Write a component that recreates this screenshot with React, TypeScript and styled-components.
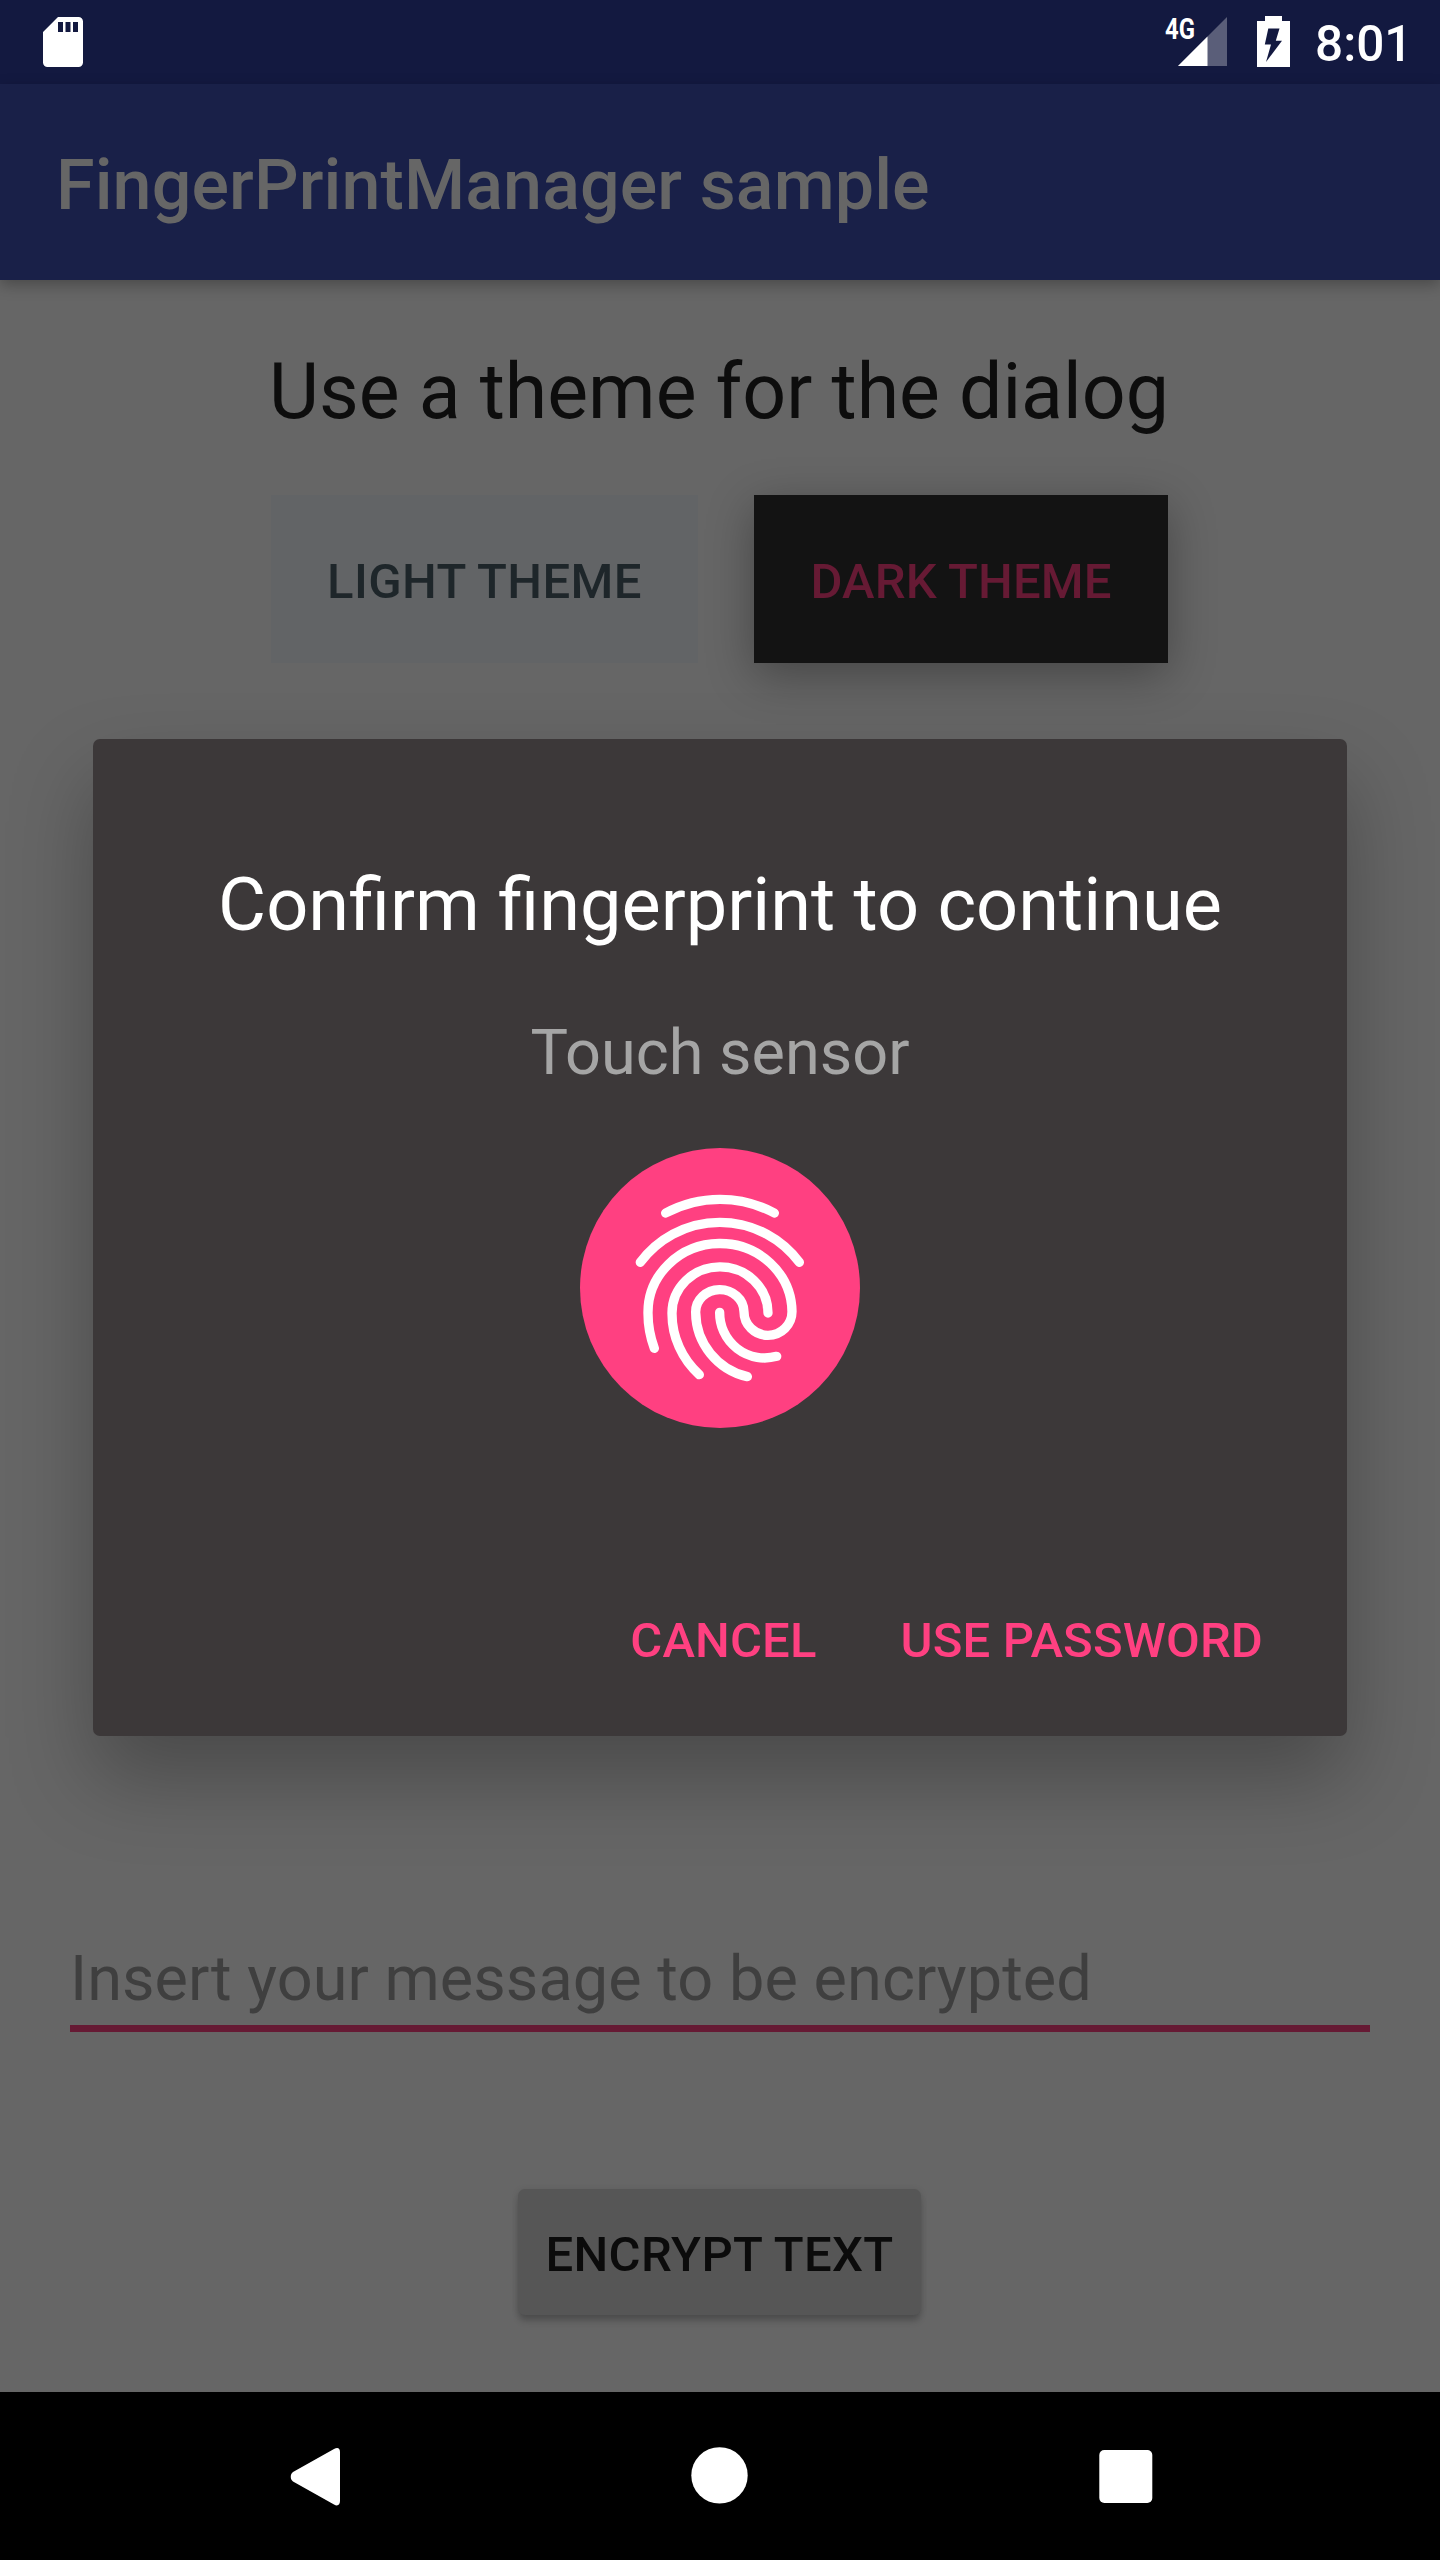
import React from 'react';
import styled, { createGlobalStyle } from 'styled-components';

const GlobalStyle = createGlobalStyle`
  *, *::before, *::after { box-sizing: border-box; }
  body { margin: 0; background: #000; }
  button { font: inherit; border: 0; margin: 0; padding: 0; background: none; }
`;

const Screen = styled.div`
  position: relative;
  display: flex;
  flex-direction: column;
  width: 1440px;
  height: 2560px;
  overflow: hidden;
  background: #666;
  font-family: Roboto, 'Liberation Sans', sans-serif;
`;

const StatusBar = styled.header`
  display: flex;
  justify-content: space-between;
  flex: none;
  height: 84px;
  padding: 0 37px 0 43px;
  background: #131940;
`;

const StatusIcons = styled.div`
  display: flex;
`;

const Icon = styled.svg`
  display: block;
  flex: none;
`;

const NetworkLabel = styled.span`
  width: 13px;
  height: 33px;
  margin-top: 13px;
  font-size: 29.5px;
  font-weight: 700;
  line-height: 33px;
  color: #fff;
  white-space: nowrap;
  transform: scaleX(0.81);
  transform-origin: left center;
`;

const Clock = styled.span`
  width: 88px;
  margin-left: 25px;
  padding-top: 2px;
  font-size: 49.5px;
  font-weight: 500;
  line-height: 84px;
  color: #fff;
  white-space: nowrap;
`;

const Toolbar = styled.div`
  position: relative;
  flex: none;
  height: 196px;
  padding: 6px 0 0 56px;
  background: #192048;
  box-shadow: 0 5px 14px rgba(0, 0, 0, 0.28);
`;

const ToolbarTitle = styled.h1`
  margin: 0;
  font-size: 70px;
  font-weight: 500;
  letter-spacing: 0.1px;
  line-height: 190px;
  color: #666;
  white-space: nowrap;
`;

const Main = styled.main`
  display: flex;
  flex: 1;
  flex-direction: column;
  align-items: center;
  padding-top: 67px;
`;

const Heading = styled.h2`
  margin: 0 2px 0 0;
  font-size: 77px;
  font-weight: 400;
  line-height: 90px;
  color: #0d0d0d;
  white-space: nowrap;
`;

const ThemeRow = styled.div`
  display: flex;
  justify-content: space-between;
  width: 897px;
  margin: 58px 1px 0 0;
`;

const ThemeButton = styled.button<{ $dark?: boolean }>`
  width: ${(p) => (p.$dark ? 414 : 427)}px;
  height: 168px;
  padding-top: 5px;
  font-size: 49px;
  font-weight: 500;
  letter-spacing: ${(p) => (p.$dark ? 0.15 : 0.4)}px;
  white-space: nowrap;
  color: ${(p) => (p.$dark ? '#661a34' : '#1e262a')};
  background: ${(p) => (p.$dark ? '#131313' : '#626466')};
  box-shadow: ${(p) => (p.$dark ? '0 12px 44px rgba(0, 0, 0, 0.32)' : 'none')};
`;

const Field = styled.div`
  width: 1300px;
  height: 91px;
  margin-top: 1278px;
  padding-top: 1px;
  border-bottom: 7px solid #661a34;
  font-size: 63px;
  letter-spacing: 0.05px;
  line-height: 74px;
  color: #3f3f3f;
  white-space: nowrap;
`;

const EncryptButton = styled.button`
  width: 403px;
  height: 126px;
  margin: 157px 1px 0 0;
  padding-top: 4px;
  border-radius: 7px;
  font-size: 49px;
  font-weight: 500;
  letter-spacing: 0.4px;
  white-space: nowrap;
  color: #0b0b0b;
  background: #565656;
  box-shadow: 0 7px 7px -1px rgba(0, 0, 0, 0.2), 0 1px 7px rgba(0, 0, 0, 0.12);
`;

const NavBar = styled.nav`
  display: flex;
  flex: none;
  justify-content: space-between;
  height: 168px;
  padding: 55px 287px 0 290px;
  background: #000;
`;

const Dialog = styled.section`
  position: absolute;
  top: 739px;
  left: 93px;
  display: flex;
  flex-direction: column;
  align-items: center;
  width: 1254px;
  height: 997px;
  padding-top: 123px;
  border-radius: 7px;
  background: #3c3839;
  box-shadow: 0 42px 84px rgba(0, 0, 0, 0.28);
`;

const DialogTitle = styled.h2`
  margin: 0;
  font-size: 73.9px;
  font-weight: 400;
  line-height: 86px;
  color: #fff;
  white-space: nowrap;
`;

const DialogText = styled.p`
  margin: 68px 0 0;
  font-size: 63px;
  line-height: 74px;
  color: #a5a5a5;
  white-space: nowrap;
`;

const FingerprintIcon = styled(Icon)`
  margin-top: 58px;
`;

const DialogActions = styled.div`
  display: flex;
  align-self: flex-end;
  gap: 84px;
  margin: 184px 84px 0 0;
`;

const DialogButton = styled.button`
  font-size: 49px;
  font-weight: 500;
  letter-spacing: 0.14px;
  line-height: 58px;
  color: #ff4081;
  white-space: nowrap;
`;

export default function App() {
  return (
    <>
      <GlobalStyle />
      <Screen>
        <StatusBar>
          <Icon width="40" height="84" viewBox="0 0 40 84" fill="#fff">
            <path
              fillRule="evenodd"
              d="M15 17H35.5A4.500 4.500 0 0 1 40 21.500V62.500A4.500 4.500 0 0 1 35.500 67H4.500A4.500 4.500 0 0 1 0 62.500V32ZM15 22V32H20V22ZM22.500 22V32H27.500V22ZM30 22V32H35V22Z"
            />
          </Icon>
          <StatusIcons>
            <NetworkLabel>4G</NetworkLabel>
            <Icon width="49" height="84" viewBox="0 0 49 84">
              <path d="M0 66L49 17V66Z" fill="#fff" fillOpacity="0.3" />
              <path d="M0 66L29.500 36.500V66Z" fill="#fff" />
            </Icon>
            <Icon width="63" height="84" viewBox="-30 0 63 84">
              <path
                fill="#fff"
                fillRule="evenodd"
                d="M8 16H25V21H33V67H0V21H8ZM11.300 28.500L7.800 44.500H14L9 62L25 40.800H18.800L22.500 28.500Z"
              />
            </Icon>
            <Clock>8:01</Clock>
          </StatusIcons>
        </StatusBar>
        <Toolbar>
          <ToolbarTitle>FingerPrintManager sample</ToolbarTitle>
        </Toolbar>
        <Main>
          <Heading>Use a theme for the dialog</Heading>
          <ThemeRow>
            <ThemeButton>LIGHT THEME</ThemeButton>
            <ThemeButton $dark>DARK THEME</ThemeButton>
          </ThemeRow>
          <Field>Insert your message to be encrypted</Field>
          <EncryptButton>ENCRYPT TEXT</EncryptButton>
        </Main>
        <NavBar>
          <Icon width="51" height="60" viewBox="0 0 51 60" fill="#fff">
            <path d="M3 25L44 2C47.500 0 50 1 50 5V54C50 58 47.500 59.500 44 57.500L3 34.500C0 32.500 0 27 3 25Z" />
          </Icon>
          <Icon width="58" height="58" viewBox="0 0 58 58" fill="#fff">
            <circle cx="28.500" cy="28.400" r="28.200" />
          </Icon>
          <Icon width="54" height="58" viewBox="0 0 54 58" fill="#fff">
            <rect x="0.300" y="3" width="53" height="53" rx="5" />
          </Icon>
        </NavBar>
        <Dialog role="dialog">
          <DialogTitle>Confirm fingerprint to continue</DialogTitle>
          <DialogText>Touch sensor</DialogText>
          <FingerprintIcon width="280" height="280" viewBox="60 54 840 840">
            <circle cx="480" cy="474" r="420" fill="#ff4081" />
            <g fill="none" stroke="#fff" strokeWidth="28" strokeLinecap="round">
              <path d="M317 249A344.500 344.500 0 0 1 643 249" />
              <path d="M241 397A297 297 0 0 1 718 397" />
              <path d="M283 655A300 300 0 0 1 264 550A216 207 0 0 1 696 545A72 71 0 0 1 552 545A72.500 67 0 0 0 407 547A200 200 0 0 0 562 740" />
              <path d="M418 734A247 247 0 0 1 336 550A144 139 0 0 1 624 549" />
              <path d="M479 547A135 135 0 0 0 650 679" />
            </g>
          </FingerprintIcon>
          <DialogActions>
            <DialogButton>CANCEL</DialogButton>
            <DialogButton>USE PASSWORD</DialogButton>
          </DialogActions>
        </Dialog>
      </Screen>
    </>
  );
}
